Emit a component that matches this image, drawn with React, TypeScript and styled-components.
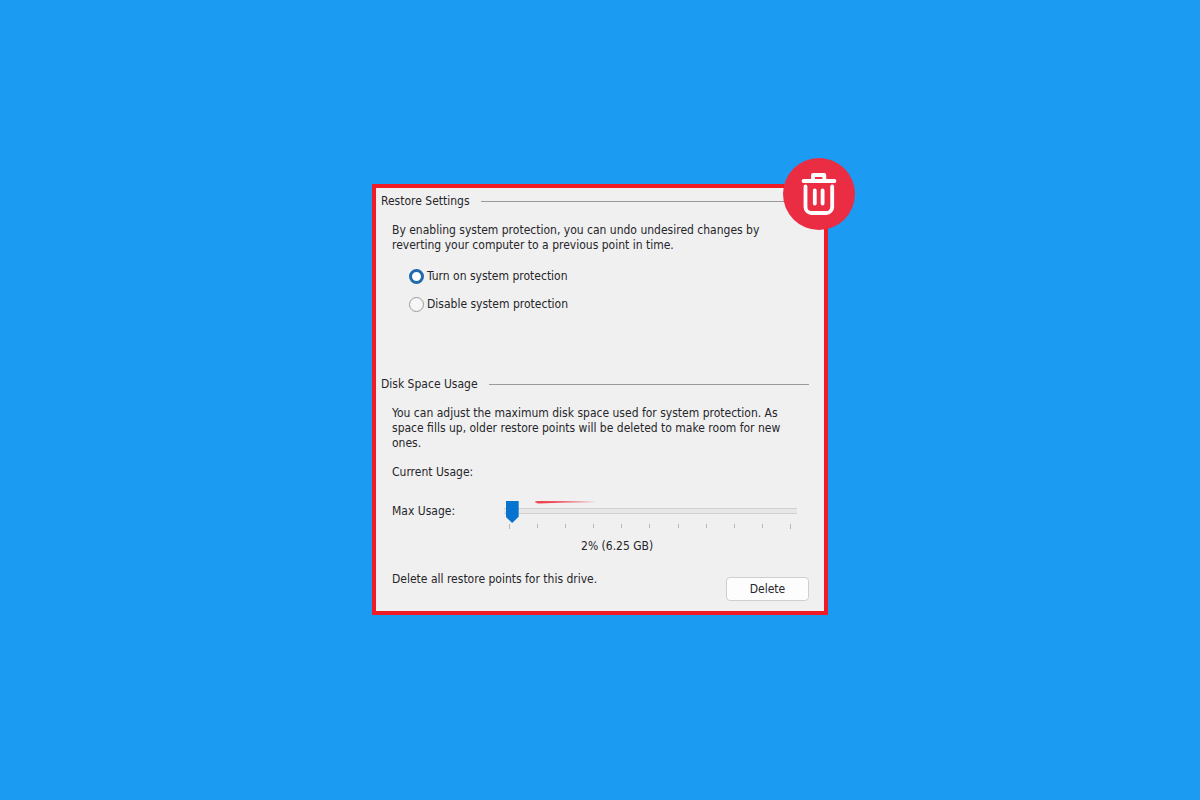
import React, { useState } from "react";
import styled, { createGlobalStyle } from "styled-components";

const GlobalStyle = createGlobalStyle`
  *, *::before, *::after { box-sizing: border-box; }
  body {
    margin: 0;
    background: #1b9bf1;
    color: #26262a;
    font-family: "DejaVu Sans Condensed", Tahoma, sans-serif;
    font-size: 12px;
    line-height: 15px;
  }
`;

const Page = styled.main`
  min-height: 100vh;
  display: flex;
  align-items: center;
  justify-content: center;
  padding-bottom: 1px;
`;

const Panel = styled.div`
  position: relative;
  width: 100%;
  max-width: 456px;
  padding: 5px 15px 10px 5px;
  background: #f0f0f0;
  border: 4px solid #ef1c25;
`;

const Badge = styled.button`
  position: absolute;
  top: -30px;
  right: -31px;
  width: 72px;
  height: 72px;
  padding: 0;
  border: 0;
  border-radius: 50%;
  background: #eb2d44;
`;

const BadgeIcon = styled.svg`
  display: block;
  fill: none;
  stroke: #fff;
`;

const Heading = styled.h2`
  display: flex;
  align-items: center;
  gap: 11px;
  margin: 0;
  font-size: 12px;
  font-weight: 400;
  line-height: 16px;

  &::after {
    content: "";
    flex: 1;
    height: 1px;
    background: #9a9a9a;
  }
`;

const Section = styled.section<{ $gap?: number }>`
  margin-bottom: ${(p) => p.$gap ?? 0}px;
`;

const Body = styled.div`
  padding: 14px 0 0 11px;
`;

const Text = styled.p`
  margin: 0;
`;

const RadioGroup = styled.fieldset`
  display: flex;
  flex-direction: column;
  align-items: flex-start;
  gap: 12px;
  margin: 15px 0 0;
  padding: 0 0 0 17px;
  border: 0;
`;

const RadioLabel = styled.label`
  display: flex;
  align-items: center;
  gap: 3px;
  line-height: 16px;
`;

const Radio = styled.input`
  appearance: none;
  width: 15px;
  height: 15px;
  margin: 0;
  border: 1px solid #9a9a9a;
  border-radius: 50%;
  background: #f6f6f6;

  &:checked {
    border: 3px solid #2069ad;
    background: #fff;
  }
`;

const UsageGrid = styled.div`
  display: grid;
  grid-template-columns: 108px 1fr;
  margin-top: 14px;
`;

const UsageLabel = styled.label`
  padding-top: 24px;
`;

const SliderBox = styled.div`
  padding: 21px 12px 0 0;
`;

const Slider = styled.input`
  appearance: none;
  display: block;
  width: 100%;
  height: 22px;
  margin: 0;
  background: linear-gradient(#d0d0d0 0 1px, #e7e7e7 1px 5px, #d0d0d0 5px) right 7px / calc(100% - 4px) 6px
    no-repeat;

  &::-webkit-slider-thumb {
    appearance: none;
    width: 13px;
    height: 22px;
    background: #0573cf;
    clip-path: polygon(0 0, 100% 0, 100% 72%, 50% 100%, 0 72%);
  }
`;

const Stroke = styled.svg`
  position: absolute;
  margin-left: 35px;
  pointer-events: none;
`;

const Ticks = styled.div`
  display: flex;
  justify-content: space-between;
  padding: 1px 6px 0 9px;
`;

const Tick = styled.span`
  width: 1px;
  height: 4px;
  background: #b8b8b8;

  &:first-child,
  &:last-child {
    height: 5px;
  }
`;

const Amount = styled.output`
  display: block;
  margin-top: 10px;
  padding-left: 81px;
`;

const Footer = styled.div`
  display: flex;
  justify-content: space-between;
  align-items: flex-start;
  margin-top: 18px;
`;

const DeleteButton = styled.button`
  width: 83px;
  height: 24px;
  margin-top: 5px;
  padding: 0;
  border: 1px solid #cfcfcf;
  border-radius: 4px;
  background: #fdfdfd;
  color: inherit;
  font: inherit;
`;

export default function App() {
  const [mode, setMode] = useState("on");
  const [usage, setUsage] = useState(2);

  return (
    <Page>
      <GlobalStyle />
      <Panel>
        <Section $gap={64}>
          <Heading>Restore Settings</Heading>
          <Body>
            <Text>
              By enabling system protection, you can undo undesired changes by
              <br />
              reverting your computer to a previous point in time.
            </Text>
            <RadioGroup aria-label="Restore Settings">
              <RadioLabel>
                <Radio type="radio" name="protection" checked={mode === "on"} onChange={() => setMode("on")} />
                Turn on system protection
              </RadioLabel>
              <RadioLabel>
                <Radio type="radio" name="protection" checked={mode === "off"} onChange={() => setMode("off")} />
                Disable system protection
              </RadioLabel>
            </RadioGroup>
          </Body>
        </Section>
        <Section>
          <Heading>Disk Space Usage</Heading>
          <Body>
            <Text>
              You can adjust the maximum disk space used for system protection. As
              <br />
              space fills up, older restore points will be deleted to make room for new
              <br />
              ones.
            </Text>
            <UsageGrid>
              <Text>Current Usage:</Text>
              <span />
              <UsageLabel htmlFor="max-usage">Max Usage:</UsageLabel>
              <SliderBox>
                <Stroke width="62" height="3" viewBox="0 0 62 3" aria-hidden="true">
                  <path d="M0 .5Q1 0 4 0L30 .3 62 .9 30 1.6 4 2.4Q0 2.2 0 .5Z" fill="#ee4550" />
                </Stroke>
                <Slider
                  id="max-usage"
                  type="range"
                  min={0}
                  max={100}
                  value={usage}
                  onChange={(e) => setUsage(Number(e.target.value))}
                />
                <Ticks aria-hidden="true">
                  {Array.from({ length: 11 }, (_, i) => (
                    <Tick key={i} />
                  ))}
                </Ticks>
                <Amount htmlFor="max-usage">
                  {usage}% ({(usage * 3.125).toFixed(2)} GB)
                </Amount>
              </SliderBox>
            </UsageGrid>
            <Footer>
              <Text>Delete all restore points for this drive.</Text>
              <DeleteButton type="button">Delete</DeleteButton>
            </Footer>
          </Body>
        </Section>
        <Badge type="button" aria-label="Delete restore points">
          <BadgeIcon width="72" height="72" viewBox="0 0 72 72" strokeWidth="3.8" strokeLinecap="round" strokeLinejoin="round">
            <path d="M20.5 23H51.5" />
            <path d="M30 22V17H41.3V22" />
            <path d="M22.5 28.5V49a6 6 0 0 0 6 6H43.2a6 6 0 0 0 6-6V28.5" />
            <path d="M31.8 32.5V45.5M39.6 32.5V45.5" />
          </BadgeIcon>
        </Badge>
      </Panel>
    </Page>
  );
}
